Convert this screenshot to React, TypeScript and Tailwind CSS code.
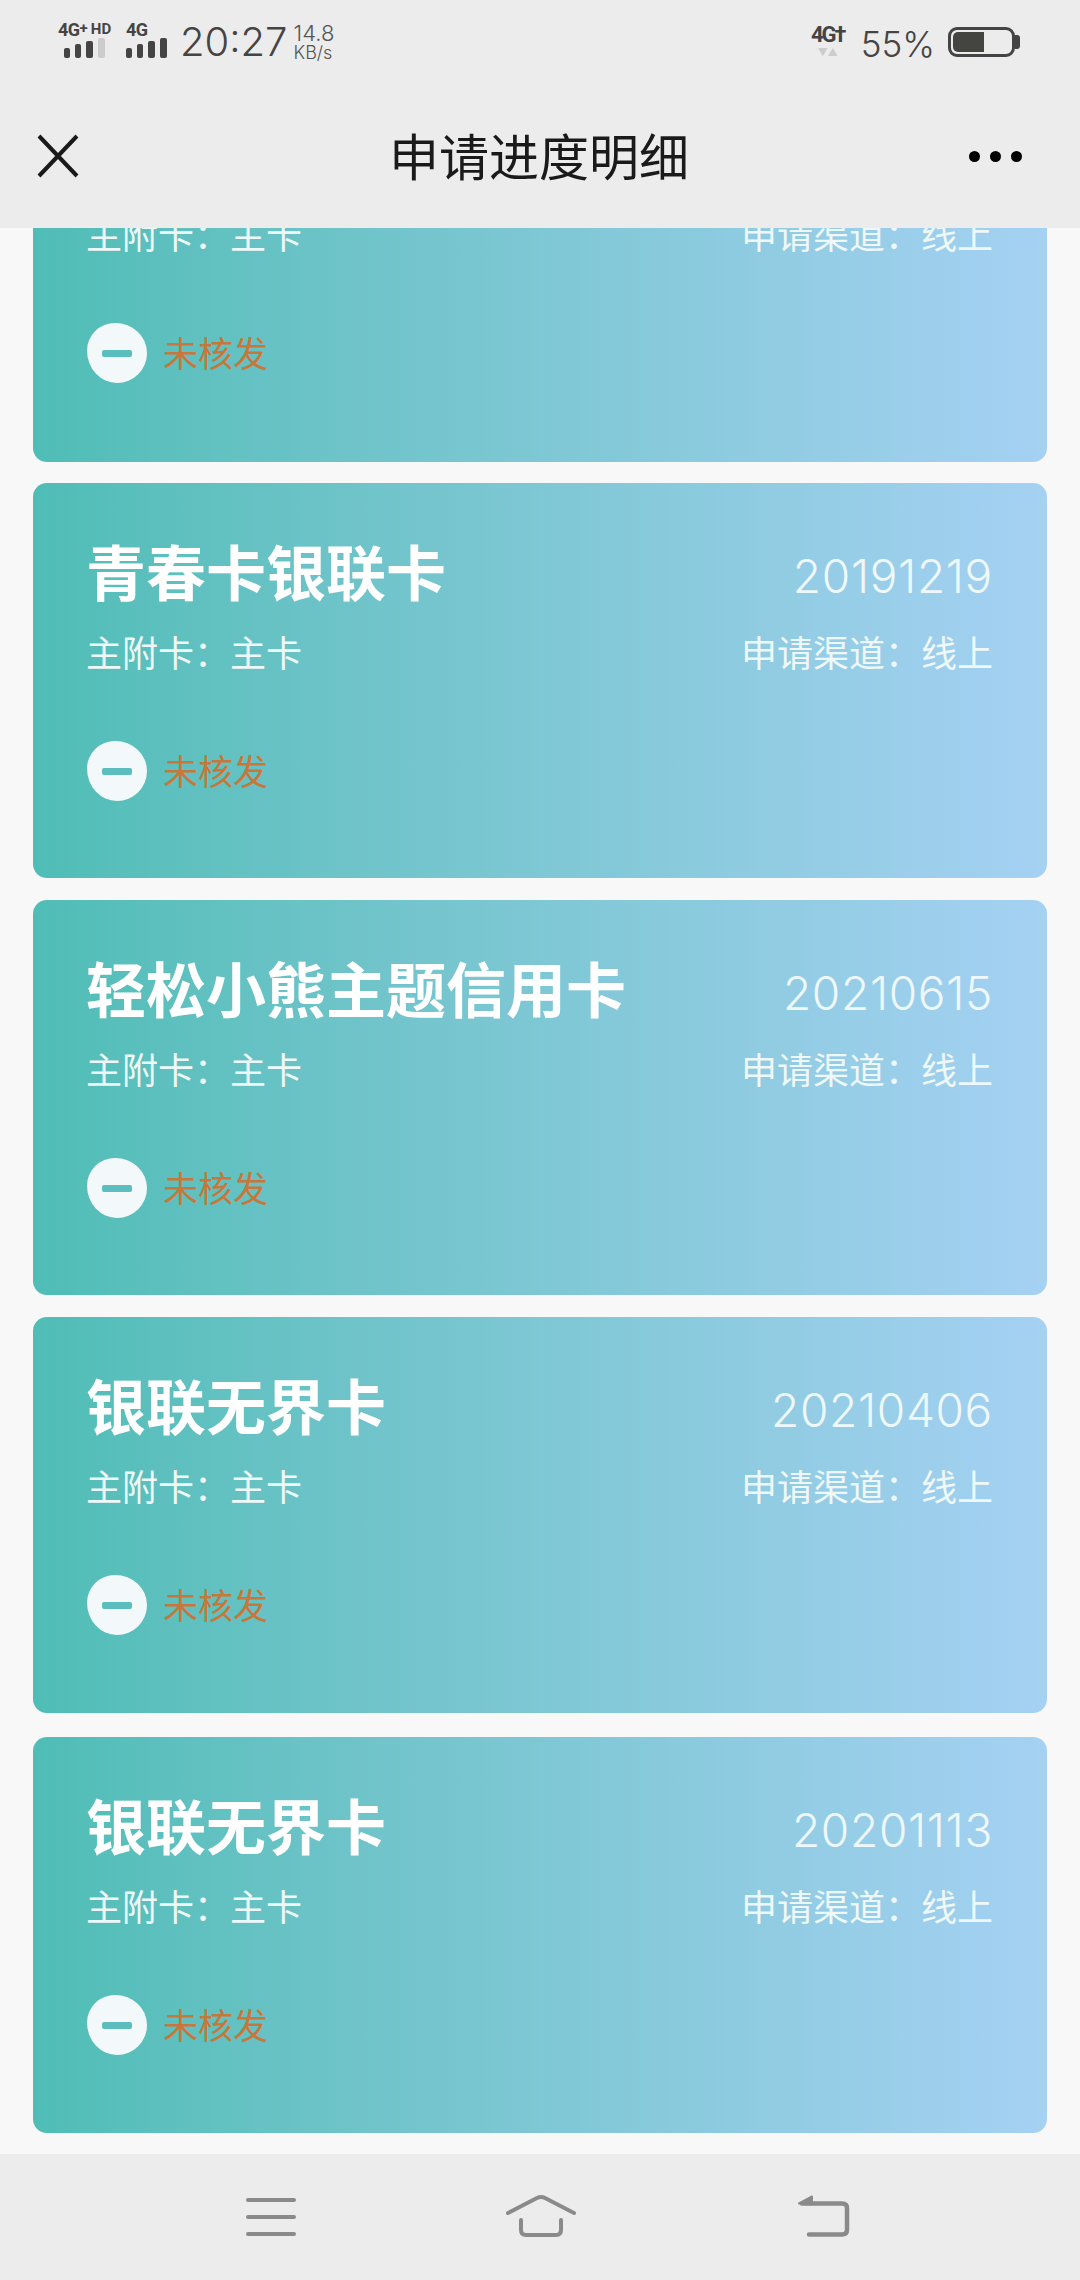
const cards = [
  { title: '', date: '', box: 'h-[397px] mb-[21px]' },
  { title: '青春卡银联卡', date: '20191219', box: 'h-[395px] mb-[22px]' },
  { title: '轻松小熊主题信用卡', date: '20210615', box: 'h-[395px] mb-[22px]' },
  { title: '银联无界卡', date: '20210406', box: 'h-[396px] mb-[24px]' },
  { title: '银联无界卡', date: '20201113', box: 'h-[396px]' },
];

function Bars({ dim }: { dim?: boolean }) {
  return (
    <div className="flex items-end gap-[5px]">
      <span className="w-[6px] h-[10px] rounded-[2px] bg-[#444444]" />
      <span className="w-[6px] h-[14px] rounded-[2px] bg-[#444444]" />
      <span className="w-[7px] h-[17px] rounded-[2px] bg-[#444444]" />
      <span className={`w-[7px] h-[20px] rounded-[2px] ${dim ? 'bg-[#cccccc]' : 'bg-[#444444]'}`} />
    </div>
  );
}

function StatusBar() {
  return (
    <div className="h-[100px] shrink-0 flex items-start justify-between pl-[58px] pr-[60px] pt-[22px] text-[#444444]">
      <div className="flex items-start">
        <div className="w-[54px] flex flex-col items-start">
          <div className="h-[16px] flex items-start whitespace-nowrap font-bold">
            <span className="text-[18px] leading-[16px] tracking-[-0.5px]">4G</span>
            <span className="text-[15px] leading-[12px]">+</span>
            <span className="ml-[3px] text-[15px] leading-[14px]">HD</span>
          </div>
          <div className="ml-[6px]"><Bars dim /></div>
        </div>
        <div className="ml-[14px] w-[41px] flex flex-col items-start">
          <span className="text-[18px] leading-[16px] font-bold tracking-[-0.5px]">4G</span>
          <div><Bars /></div>
        </div>
        <span className="ml-[13px] mt-[-2px] text-[40px] leading-[44px] font-light font-[Inter]">20:27</span>
        <div className="ml-[6px] flex flex-col items-start text-[#555555] font-light font-[Inter]">
          <span className="text-[22px] leading-[22px]">14.8</span>
          <span className="text-[18px] leading-[18px]">KB/s</span>
        </div>
      </div>
      <div className="flex items-start mt-[4px]">
        <div className="flex flex-col items-center w-[36px]">
          <span className="text-[22px] leading-[18px] font-bold tracking-[-2px] whitespace-nowrap">4G†</span>
          <span className="text-[10px] leading-[10px] mt-[4px] text-[#cccccc] whitespace-nowrap">▼▲</span>
        </div>
        <span className="ml-[15px] text-[35px] leading-[36px] font-light font-[Inter]">55%</span>
        <div className="ml-[13px] mt-[1px] flex items-center">
          <div className="w-[67px] h-[30px] rounded-[9px] border-[3px] border-[#444444] p-[2px]">
            <div className="w-[31px] h-full rounded-l-[5px] bg-[#444440]" />
          </div>
          <span className="w-[5px] h-[14px] rounded-r-[3px] bg-[#444444]" />
        </div>
      </div>
    </div>
  );
}

function NavBar() {
  return (
    <div className="h-[128px] shrink-0 grid grid-cols-[1fr_auto_1fr] items-start pl-[36px] pr-[58px] pt-[33px]">
      <svg width="44" height="46" viewBox="0 0 44 46" fill="none" stroke="#1a1a1a" strokeWidth="4">
        <path d="M3 3 L41 43 M41 3 L3 43" />
      </svg>
      <span className="ml-[20px] mt-[-2px] text-[50px] leading-[56px] text-[#1a1a1a]">申请进度明细</span>
      <div className="mt-[18px] flex justify-end gap-[10px]">
        <span className="w-[11px] h-[11px] rounded-full bg-black" />
        <span className="w-[11px] h-[11px] rounded-full bg-black" />
        <span className="w-[11px] h-[11px] rounded-full bg-black" />
      </div>
    </div>
  );
}

function Card({ title, date, className }: { title: string; date: string; className: string }) {
  return (
    <div className={`rounded-[14px] bg-gradient-to-r from-[#4fbdb6] to-[#a5d1f3] pl-[53px] pr-[54px] pt-[59px] ${className}`}>
      <div className="h-[68px] flex items-center justify-between">
        <span className="text-[60px] leading-[68px] font-bold text-white">{title}</span>
        <span className="text-[46px] leading-[68px] tracking-[0.7px] font-light font-[Inter] text-[#eef8fa]">{date}</span>
      </div>
      <div className="mt-[23px] flex items-center justify-between text-[36px] leading-[44px] text-[#eef8f8]">
        <span>主附卡：主卡</span>
        <span>申请渠道：线上</span>
      </div>
      <div className="mt-[64px] ml-[1px] flex items-center">
        <span className="w-[60px] h-[60px] rounded-[47%_53%_50%_50%/46%_50%_50%_54%] bg-[#f3f9fa] flex items-center justify-center">
          <span className="w-[30px] h-[7px] rounded-[2px] bg-[#5bbdbd]" />
        </span>
        <span className="ml-[16px] mt-[6px] text-[35px] leading-[44px] text-[#c8763a]">未核发</span>
      </div>
    </div>
  );
}

export default function App() {
  return (
    <div
      className="w-[1080px] h-[2280px] flex flex-col overflow-hidden bg-[#f8f8f8]"
      style={{ fontFamily: 'Roboto, "Noto Sans CJK SC", sans-serif' }}
    >
      <header className="relative z-10 shrink-0 bg-[#ececec]">
        <StatusBar />
        <NavBar />
      </header>
      <main className="flex-1 min-h-0 overflow-hidden px-[33px]">
        <div className="-mt-[163px]">
          {cards.map((card, i) => (
            <Card key={i} title={card.title} date={card.date} className={card.box} />
          ))}
        </div>
      </main>
      <footer className="h-[126px] shrink-0 bg-[#ececec] flex items-start pt-[40px] pl-[245px]">
        <svg width="52" height="46" viewBox="0 0 52 46" fill="none" stroke="#8a8a8a" strokeWidth="4" strokeLinecap="round">
          <path d="M3 6 H49 M3 23 H49 M3 40 H49" />
        </svg>
        <svg className="ml-[207px]" width="74" height="46" viewBox="0 0 74 46" fill="none" stroke="#8a8a8a" strokeWidth="4" strokeLinecap="round" strokeLinejoin="round">
          <path d="M4 19 L33 4 Q37 2 41 4 L70 19" />
          <path d="M17 26 V36 Q17 41 22 41 H52 Q57 41 57 36 V26" />
        </svg>
        <svg className="ml-[218px]" width="55" height="46" viewBox="0 0 55 46" fill="none" stroke="#8a8a8a" strokeWidth="4.5" strokeLinecap="round" strokeLinejoin="round">
          <path d="M6 9.5 H46 Q51 9.5 51 14 V36 Q51 40.5 46 40.5 H13" />
          <path d="M3 9.5 L16 2.5 V10.5 Z" fill="#8a8a8a" strokeWidth="2" />
        </svg>
      </footer>
    </div>
  );
}
